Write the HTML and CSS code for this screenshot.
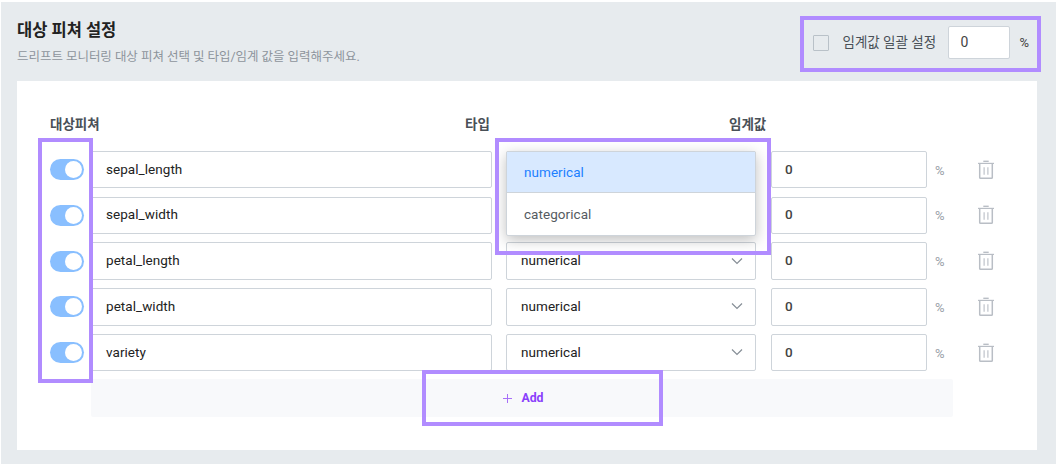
FILE: index.html
```
<!DOCTYPE html>
<html lang="ko">
<head>
<meta charset="utf-8">
<title>대상 피쳐 설정</title>
<link rel="stylesheet" href="styles.css">
</head>
<body>
<svg class="defs" width="0" height="0">
  <symbol id="trash" viewBox="0 0 16 20"><path d="M5.3 1.3h5.4" stroke-width="1.4"/><path d="M0 3.4h16" stroke-width="1.2"/><path d="M1.7 3.5V17.4q0 .9.9.9h10.8q.9 0 .9-.9V3.5" stroke-width="1.5"/><path d="M6.1 7.3v7.4M9.9 7.3v7.4" stroke-width="1.1"/></symbol>
  <symbol id="chevron" viewBox="0 0 12 8"><path d="M1 1.5l5 5 5-5" stroke-width="1.2"/></symbol>
</svg>
<main class="panel">
  <header class="head">
    <div class="intro">
      <h1 class="title">대상 피쳐 설정</h1>
      <p class="desc">드리프트 모니터링 대상 피쳐 선택 및 타입/임계 값을 입력해주세요.</p>
    </div>
    <div class="bulk">
      <span class="check"></span>
      <span class="bulk-label">임계값 일괄 설정</span>
      <span class="bulk-input">0</span>
      <span class="bulk-unit">%</span>
    </div>
  </header>
  <section class="card">
    <div class="columns"><span>대상피쳐</span><span>타입</span><span>임계값</span></div>
    <div class="rows">
      <div class="row"><span class="toggle"></span><span class="field name">sepal_length</span><span class="field select"></span><span class="field value">0</span><span class="unit">%</span><svg class="trash"><use href="#trash"/></svg></div>
      <div class="row"><span class="toggle"></span><span class="field name">sepal_width</span><span class="field select"></span><span class="field value">0</span><span class="unit">%</span><svg class="trash"><use href="#trash"/></svg></div>
      <div class="row"><span class="toggle"></span><span class="field name">petal_length</span><span class="field select">numerical<svg class="chev"><use href="#chevron"/></svg></span><span class="field value">0</span><span class="unit">%</span><svg class="trash"><use href="#trash"/></svg></div>
      <div class="row"><span class="toggle"></span><span class="field name">petal_width</span><span class="field select">numerical<svg class="chev"><use href="#chevron"/></svg></span><span class="field value">0</span><span class="unit">%</span><svg class="trash"><use href="#trash"/></svg></div>
      <div class="row"><span class="toggle"></span><span class="field name">variety</span><span class="field select">numerical<svg class="chev"><use href="#chevron"/></svg></span><span class="field value">0</span><span class="unit">%</span><svg class="trash"><use href="#trash"/></svg></div>
    </div>
    <div class="add"><svg class="plus" viewBox="0 0 9 9"><path d="M4.5 0v9M0 4.5h9"/></svg><span>Add</span></div>
  </section>
</main>
<div class="menu"><div class="option selected">numerical</div><div class="option">categorical</div></div>
<div class="mark mark-bulk"></div>
<div class="mark mark-toggles"></div>
<div class="mark mark-menu"></div>
<div class="mark mark-add"></div>
</body>
</html>
```
FILE: styles.css
```
* { box-sizing: border-box; }
body {
  margin: 0;
  height: 464px;
  overflow: hidden;
  position: relative;
  background: #fff;
  padding: 2px 0 0 1px;
  font-family: Roboto, "Noto Sans CJK KR", sans-serif;
  font-size: 13.5px;
  color: #222;
}
.defs { position: absolute; }
.panel { height: 462px; background: #e7ebee; padding: 0 19px 14px 16px; display: flex; flex-direction: column; }
.head { height: 79px; flex: none; display: flex; justify-content: space-between; }
.intro { padding-top: 17px; }
.title { margin: 0; font-size: 16.5px; line-height: 24px; font-weight: 700; color: #222; }
.desc { margin: 5px 0 0; font-size: 12.5px; line-height: 18px; letter-spacing: -.03px; color: #8d949c; }
.bulk { display: flex; align-items: center; height: 33px; margin-top: 24px; padding-right: 8px; color: #444; }
.check { width: 16px; height: 16px; border: 1.5px solid #b9c1c8; border-radius: 1px; }
.bulk-label { width: 94px; margin: 0 12px 3px 13px; font-size: 13.5px; white-space: nowrap; color: #495057; }
.bulk-input { width: 62px; height: 33px; line-height: 31px; padding-left: 11px; font-size: 14px; background: #fff; border: 1px solid #ced4da; border-radius: 2px; }
.bulk-unit { margin-left: 9px; font-size: 13px; }
.card { height: 369px; background: #fff; padding: 33px 33px 0; }
.columns { display: grid; grid-template-columns: 415px 264px auto; height: 20px; line-height: 20px; font-weight: 700; font-size: 13.5px; color: #495057; }
.rows { display: grid; grid-auto-rows: 37.3px; row-gap: 8.45px; margin-top: 17px; }
.row { display: grid; grid-template-columns: 41px 401px 14px 250px 15px 156px 8px 43px 16px; align-items: center; }
.toggle { width: 34px; height: 21px; border-radius: 11px; background: #89bfff; padding: 2px; display: flex; justify-content: flex-end; }
.toggle::after { content: ""; width: 17px; height: 17px; border-radius: 50%; background: #fff; }
.field { height: 100%; display: flex; align-items: center; border: 1px solid #ced4da; border-radius: 2px; background: #fff; padding: 0 12px 2px 14px; letter-spacing: .05px; }
.name { grid-column: 2; }
.select { grid-column: 4; justify-content: space-between; }
.value { grid-column: 6; padding-left: 13px; font-weight: 500; color: #444; }
.unit { grid-column: 8; font-size: 13px; color: #9aa1a9; padding-top: 1px; }
.trash { grid-column: 9; width: 16px; height: 20px; fill: none; stroke: #b9bec5; }
.chev { width: 12px; height: 8px; margin-top: 1px; fill: none; stroke: #868e96; }
.add { width: 862px; height: 38px; margin: 8px 0 0 41px; padding-left: 3px; background: #f8f9fb; border-radius: 2px; display: flex; align-items: center; justify-content: center; gap: 9px; color: #8a3ffc; font-weight: 700; font-size: 12.3px; }
.plus { width: 9px; height: 9px; fill: none; stroke: #a870f8; stroke-width: 1; }
.menu { position: absolute; left: 506px; top: 151px; width: 250px; height: 85px; border: 1px solid #ced4da; border-radius: 2px; background: #fff; box-shadow: 0 4px 14px rgba(0,0,0,.25); }
.option { height: 42px; line-height: 43px; padding-left: 17px; color: #555b61; letter-spacing: .05px; }
.selected { height: 41px; line-height: 41px; background: #d8e9ff; color: #1c80ff; border-bottom: 1px solid #ced4da; }
.mark { position: absolute; border: 4px solid #b18cff; }
.mark-bulk { left: 800px; top: 16px; width: 241px; height: 56px; }
.mark-toggles { left: 38px; top: 138px; width: 55px; height: 245px; }
.mark-menu { left: 495px; top: 138px; width: 276px; height: 117px; }
.mark-add { left: 422px; top: 370px; width: 241px; height: 56px; }
```
